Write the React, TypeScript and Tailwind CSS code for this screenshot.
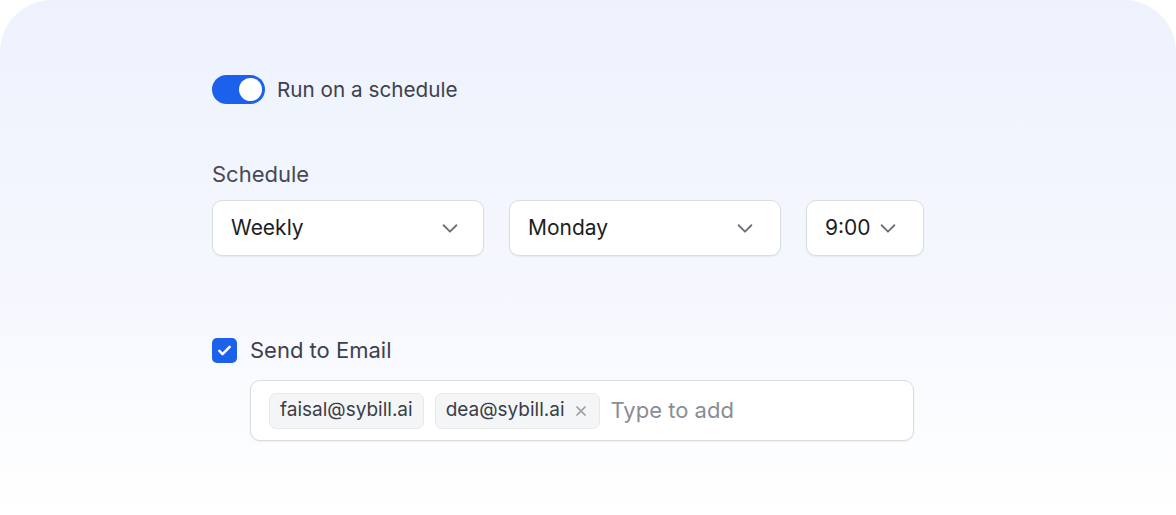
import { useState } from 'react';

const font = { fontFamily: 'Inter, "Noto Sans", sans-serif' };

function Chevron({ className = '' }: { className?: string }) {
  return (
    <svg viewBox="0 0 24 24" className={className} fill="none" stroke="currentColor" strokeWidth={2} strokeLinecap="round" strokeLinejoin="round">
      <path d="M5 9l7 7 7-7" />
    </svg>
  );
}

function Select({ value, width, pad }: { value: string; width: string; pad: string }) {
  return (
    <div className={`flex items-center justify-between h-[56px] ${width} ${pad} bg-white border border-[#d9dce2] rounded-[10px] shadow-[0_1px_2px_rgba(16,24,40,0.06)]`}>
      <span className="text-[21px] text-[#1c1e23]">{value}</span>
      <Chevron className="w-[22px] h-[22px] text-[#6b6f78]" />
    </div>
  );
}

export default function App() {
  const [enabled, setEnabled] = useState(true);
  const [sendEmail, setSendEmail] = useState(true);
  const emails = ['faisal@sybill.ai', 'dea@sybill.ai'];

  return (
    <div className="w-[1176px] h-[515px] bg-white" style={font}>
      <div className="h-full rounded-t-[52px] bg-gradient-to-b from-[#edf2fd] via-[#f6f8fe] via-60% to-white pl-[212px] pt-[74px]">
        {/* Toggle */}
        <div className="flex items-center gap-3">
          <button
            onClick={() => setEnabled(!enabled)}
            className={`w-[53px] h-[29px] rounded-full p-[3px] flex items-center ${enabled ? 'bg-[#1b61ec] justify-end' : 'bg-gray-300 justify-start'}`}
          >
            <span className="w-[23px] h-[23px] rounded-full bg-white block" />
          </button>
          <span className="text-[20.7px] text-[#3d414c]">Run on a schedule</span>
        </div>

        {/* Schedule */}
        <div className="mt-[55px]">
          <div className="text-[22px] text-[#454957] leading-[28px]">Schedule</div>
          <div className="flex gap-[25px] mt-[12px]">
            <Select value="Weekly" width="w-[272px]" pad="pl-[18px] pr-[22px]" />
            <Select value="Monday" width="w-[272px]" pad="pl-[18px] pr-[24px]" />
            <div className="flex items-center gap-[6px] h-[56px] w-[118px] pl-[18px] bg-white border border-[#d9dce2] rounded-[10px] shadow-[0_1px_2px_rgba(16,24,40,0.06)]">
              <span className="text-[21px] text-[#1c1e23]">9:00</span>
              <Chevron className="w-[22px] h-[22px] text-[#6b6f78]" />
            </div>
          </div>
        </div>

        {/* Email */}
        <div className="mt-[78px]">
          <div className="flex items-center gap-[13px]">
            <button
              onClick={() => setSendEmail(!sendEmail)}
              className={`w-[25px] h-[25px] rounded-[5px] flex items-center justify-center ${sendEmail ? 'bg-[#1b61ec]' : 'bg-white border border-gray-300'}`}
            >
              {sendEmail && (
                <svg viewBox="0 0 24 24" className="w-[19px] h-[19px]" fill="none" stroke="white" strokeWidth={3.2} strokeLinecap="round" strokeLinejoin="round">
                  <path d="M5.5 12.5l4 4L18.5 7.5" />
                </svg>
              )}
            </button>
            <span className="text-[22px] text-[#3d414c]">Send to Email</span>
          </div>
          <div className="ml-[38px] mt-[13px] w-[664px] h-[61px] bg-white border border-[#d9dce2] rounded-[10px] shadow-[0_1px_2px_rgba(16,24,40,0.06)] flex items-center pl-[18px] gap-[11px]">
            {emails.map((e, i) => (
              <span key={e} className="flex items-center gap-[8px] h-[36px] px-[10px] rounded-[7px] bg-[#f4f5f7] border border-[#e8e9ec] text-[19px] text-[#3a3d45]">
                {e}
                {i === 1 && (
                  <svg viewBox="0 0 24 24" className="w-[16px] h-[16px]" fill="none" stroke="#9a9da5" strokeWidth={2.6} strokeLinecap="round">
                    <path d="M6 6l12 12M18 6L6 18" />
                  </svg>
                )}
              </span>
            ))}
            <span className="text-[22px] text-[#8a8d95]">Type to add</span>
          </div>
        </div>
      </div>
    </div>
  );
}
